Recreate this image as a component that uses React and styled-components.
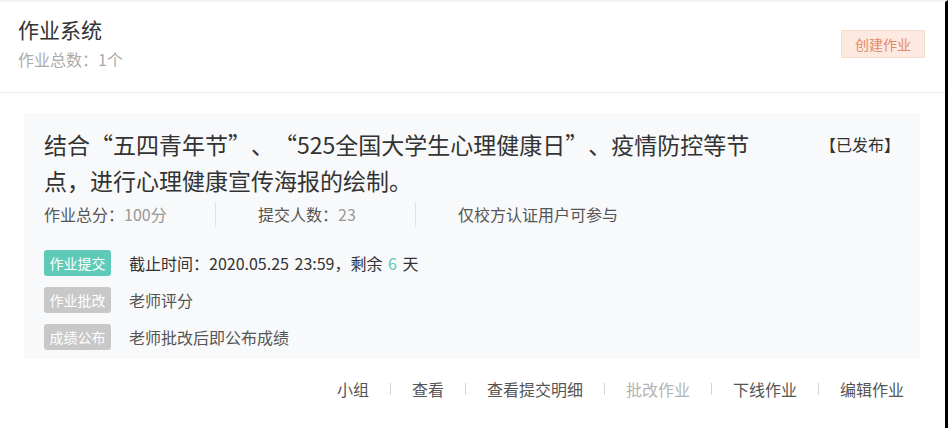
import React from 'react';
import styled, { createGlobalStyle } from 'styled-components';

const Global = createGlobalStyle`
  html, body { margin: 0; padding: 0; background: #fff; }
  body {
    font-family: "Noto Sans CJK SC", "Noto Sans", sans-serif;
    text-spacing-trim: space-all;
  }
  * { box-sizing: border-box; }
`;

const Frame = styled.div`
  width: 948px;
  height: 428px;
  overflow: hidden;
  background: #fff;
  border-top: 2px solid #f2f2f2;
  border-right: 3px solid #000;
`;

const Header = styled.header`
  height: 91px;
  display: flex;
  justify-content: space-between;
  align-items: flex-start;
  padding: 0 20px 0 18px;
  border-bottom: 1px solid #ececec;
`;

const HeadText = styled.div`
  margin-top: 13px;
  display: flex;
  flex-direction: column;
  gap: 4px;
`;

const PageTitle = styled.h1`
  margin: 0;
  font-size: 21px;
  line-height: 29px;
  font-weight: 400;
  color: #333;
`;

const PageSub = styled.div`
  font-size: 16px;
  line-height: 22px;
  color: #ababab;
`;

const CreateButton = styled.button`
  margin-top: 28px;
  width: 84px;
  height: 28px;
  padding: 0;
  border: 1px solid #f7d9ca;
  background: #fde9df;
  color: #e08a6e;
  font-family: inherit;
  font-size: 14px;
  border-radius: 2px;
`;

const Card = styled.section`
  margin: 20px 25px 0 24px;
  height: 246px;
  background: #f8f9fa;
  padding: 13px 20px 9px 20px;
  display: flex;
  flex-direction: column;
`;

const TitleRow = styled.div`
  display: flex;
  justify-content: space-between;
  align-items: flex-start;
`;

const TaskTitle = styled.div`
  width: 730px;
  font-size: 23px;
  line-height: 36px;
  color: #333;
  font-variant-east-asian: full-width;
`;

const Num = styled.span`
  font-variant-east-asian: normal;
`;

const Status = styled.div`
  font-size: 16px;
  line-height: 36px;
  color: #333;
`;

const Stats = styled.div`
  display: flex;
  margin-top: 4px;
  height: 25px;
`;

const Stat = styled.div`
  width: ${(p) => (p.$w ? `${p.$w}px` : 'auto')};
  padding-left: ${(p) => (p.$first ? 0 : 42)}px;
  border-right: ${(p) => (p.$last ? 'none' : '1px solid #e2e2e2')};
  font-size: 16px;
  line-height: 25px;
  color: #555;
`;

const Value = styled.span`
  color: #999;
`;

const Steps = styled.div`
  margin-top: 23px;
  display: flex;
  flex-direction: column;
  gap: 11px;
`;

const Step = styled.div`
  display: flex;
  align-items: center;
  gap: 18px;
`;

const Tag = styled.span`
  width: 67px;
  height: 26px;
  border-radius: 3px;
  display: flex;
  align-items: center;
  justify-content: center;
  font-size: 14px;
  color: #fff;
  background: ${(p) => (p.$active ? '#5ecab7' : '#c8c8c8')};
`;

const StepText = styled.span`
  font-size: 16px;
  line-height: 24px;
  color: ${(p) => (p.$dark ? '#333' : '#555')};
  word-spacing: 2px;
`;

const Accent = styled.span`
  color: #5ecab7;
`;

const Links = styled.nav`
  margin-top: 18px;
  display: flex;
  justify-content: flex-end;
  align-items: center;
  padding-right: 41px;
`;

const LinkItem = styled.span`
  font-size: 16px;
  line-height: 24px;
  color: ${(p) => (p.$disabled ? '#b3b3b3' : '#555')};
`;

const Sep = styled.span`
  width: 1px;
  height: 12px;
  margin: 0 21px;
  background: #d4d4d4;
`;

const links = [
  { t: '小组' },
  { t: '查看' },
  { t: '查看提交明细' },
  { t: '批改作业', d: true },
  { t: '下线作业' },
  { t: '编辑作业' },
];

export default function App() {
  return (
    <>
      <Global />
      <Frame>
        <Header>
          <HeadText>
            <PageTitle>作业系统</PageTitle>
            <PageSub>作业总数：1个</PageSub>
          </HeadText>
          <CreateButton>创建作业</CreateButton>
        </Header>
        <Card>
          <TitleRow>
            <TaskTitle>
              结合“五四青年节”、“<Num>525</Num>全国大学生心理健康日”、疫情防控等节点，进行心理健康宣传海报的绘制。
            </TaskTitle>
            <Status>【已发布】</Status>
          </TitleRow>
          <Stats>
            <Stat $first $w={172}>
              作业总分：<Value>100分</Value>
            </Stat>
            <Stat $w={200}>
              提交人数：<Value>23</Value>
            </Stat>
            <Stat $last>仅校方认证用户可参与</Stat>
          </Stats>
          <Steps>
            <Step>
              <Tag $active>作业提交</Tag>
              <StepText $dark>
                截止时间：2020.05.25 23:59，剩余 <Accent>6</Accent> 天
              </StepText>
            </Step>
            <Step>
              <Tag>作业批改</Tag>
              <StepText>老师评分</StepText>
            </Step>
            <Step>
              <Tag>成绩公布</Tag>
              <StepText>老师批改后即公布成绩</StepText>
            </Step>
          </Steps>
        </Card>
        <Links>
          {links.map((l, i) => (
            <React.Fragment key={l.t}>
              {i > 0 && <Sep />}
              <LinkItem $disabled={l.d}>{l.t}</LinkItem>
            </React.Fragment>
          ))}
        </Links>
      </Frame>
    </>
  );
}
